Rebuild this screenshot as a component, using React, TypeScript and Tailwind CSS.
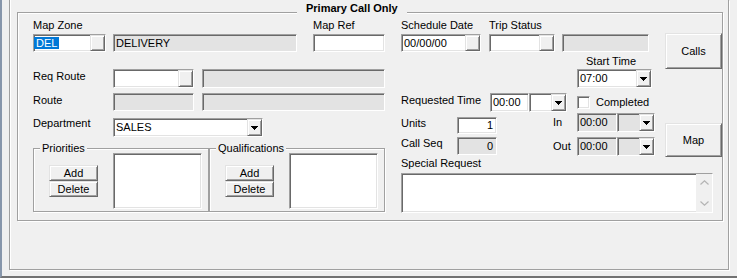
import React from 'react';

// classic win32 edges
const sunken =
  'border border-t-[#a0a0a0] border-l-[#a0a0a0] border-b-white border-r-white shadow-[inset_1px_1px_0_#696969,inset_-1px_-1px_0_#e3e3e3]';
const raised =
  'border border-t-[#e3e3e3] border-l-[#e3e3e3] border-b-[#696969] border-r-[#696969] shadow-[inset_1px_1px_0_#fff,inset_-1px_-1px_0_#a0a0a0] bg-[#f0f0f0]';
const etched = 'border border-[#a0a0a0] shadow-[inset_1px_1px_0_#fff,1px_1px_0_#fff]';

type P = { className?: string; children?: React.ReactNode };

function Label({ className = '', children }: P) {
  return <div className={`h-[13px] leading-[13px] whitespace-nowrap ${className}`}>{children}</div>;
}

function Arrow() {
  return (
    <svg width="7" height="4" viewBox="0 0 7 4" shapeRendering="crispEdges">
      <path d="M0 0h7v1h-1v1h-1v1h-1v1h-1v-1h-1v-1h-1v-1h-1z" fill="#000" />
    </svg>
  );
}

function Box({ className = '', gray, right, children }: P & { gray?: boolean; right?: boolean }) {
  return (
    <div
      className={`${sunken} ${gray ? 'bg-[#e3e3e3]' : 'bg-white'} flex items-center whitespace-nowrap overflow-hidden ${
        right ? 'justify-end pr-[3px]' : 'pl-[2px]'
      } ${className}`}
    >
      {children}
    </div>
  );
}

function Combo({ className = '', gray, arrow, children }: P & { gray?: boolean; arrow?: boolean }) {
  return (
    <div className={`${sunken} ${gray ? 'bg-[#e3e3e3]' : 'bg-white'} flex ${className}`}>
      <div className="flex-1 flex items-center pl-[2px] whitespace-nowrap overflow-hidden">{children}</div>
      <div className={`${raised} w-[15px] flex items-center justify-center`}>{arrow && <Arrow />}</div>
    </div>
  );
}

function Button({ className = '', children }: P) {
  return <div className={`${raised} flex items-center justify-center ${className}`}>{children}</div>;
}

function GroupBox({ title, className = '', children }: P & { title: string }) {
  return (
    <div className={`relative ${etched} ${className}`}>
      <span className="absolute left-[6px] -top-[7px] px-[2px] bg-[#f0f0f0] leading-[13px] whitespace-nowrap">
        {title}
      </span>
      {children}
    </div>
  );
}

function ListPanel() {
  return (
    <div className="flex items-start pl-[15px] pt-[4px]">
      <div className="mt-[12px] flex flex-col w-[49px]">
        <Button className="h-[16px]">Add</Button>
        <Button className="h-[16px]">Delete</Button>
      </div>
      <div className={`${sunken} bg-white ml-[15px] w-[89px] h-[56px]`} />
    </div>
  );
}

function Chevron({ up }: { up?: boolean }) {
  return (
    <svg width="9" height="5" viewBox="0 0 9 5">
      <path d={up ? 'M0.5 4.5L4.5 0.8L8.5 4.5' : 'M0.5 0.5L4.5 4.2L8.5 0.5'} fill="none" stroke="#b4b4b4" strokeWidth="1.2" />
    </svg>
  );
}

export default function App() {
  return (
    <div className="w-[737px] h-[278px] bg-[#f0f0f0] border-l-2 border-l-[#8796ab] border-b-2 border-b-[#737373] font-['Liberation_Sans',Arial,sans-serif] text-[11px] leading-[13px] text-black overflow-hidden">
      {/* outer frame, its top runs off the window */}
      <div className="ml-[7px] w-[720px] h-[270px] border-l border-r border-b border-[#a0a0a0] shadow-[inset_1px_0_0_#fff,1px_1px_0_#fff] pt-[12px] pl-[7px]">
        <div className={`relative ${etched} w-[706px] h-[209px]`}>
          <span className="absolute left-[279px] -top-[11px] px-[9px] bg-[#f0f0f0] font-bold leading-[13px] whitespace-nowrap">
            Primary Call Only
          </span>

          <div className="flex pl-[15px] pt-[6px]">
            {/* left column */}
            <div className="w-[352px] flex flex-col">
              <div className="flex items-start">
                <div>
                  <Label>Map Zone</Label>
                  <div className="flex mt-[2px]">
                    <Combo className="w-[73px] h-[18px]">
                      <span className="-ml-[2px] bg-[#0078d7] text-white px-[2px] leading-[12px]">DEL</span>
                    </Combo>
                    <Box gray className="ml-[7px] w-[184px] h-[18px]">DELIVERY</Box>
                  </div>
                </div>
                <div className="ml-[16px]">
                  <Label>Map Ref</Label>
                  <Box className="mt-[2px] w-[72px] h-[18px]" />
                </div>
              </div>

              <div className="flex items-start mt-[17px]">
                <Label className="w-[80px] mt-[1px]">Req Route</Label>
                <Combo className="w-[81px] h-[19px]" />
                <Box gray className="ml-[8px] w-[183px] h-[19px]" />
              </div>

              <div className="flex items-start mt-[5px]">
                <Label className="w-[80px] mt-[1px]">Route</Label>
                <Box gray className="w-[81px] h-[18px]" />
                <Box gray className="ml-[8px] w-[183px] h-[18px]" />
              </div>

              <div className="flex items-start mt-[6px]">
                <Label className="w-[80px]">Department</Label>
                <Combo arrow className="mt-[1px] w-[150px] h-[19px]">SALES</Combo>
              </div>

              <div className="flex mt-[11px]">
                <GroupBox title="Priorities" className="w-[176px] h-[64px]">
                  <ListPanel />
                </GroupBox>
                <GroupBox title="Qualifications" className="w-[176px] h-[64px]">
                  <ListPanel />
                </GroupBox>
              </div>
            </div>

            {/* right area */}
            <div className="ml-[16px] flex flex-col">
              <div className="flex">
                <div className="w-[255px] flex flex-col">
                  <div className="flex items-start">
                    <div>
                      <Label>Schedule Date</Label>
                      <Combo className="mt-[2px] w-[80px] h-[18px]">00/00/00</Combo>
                    </div>
                    <div className="ml-[8px]">
                      <Label>Trip Status</Label>
                      <div className="flex mt-[2px]">
                        <Combo className="w-[66px] h-[18px]" />
                        <Box gray className="ml-[7px] w-[87px] h-[18px]" />
                      </div>
                    </div>
                  </div>

                  <div className="pl-[176px] flex flex-col">
                    <Label className="ml-[9px] mt-[3px]">Start Time</Label>
                    <Combo arrow className="mt-[1px] w-[75px] h-[19px]">07:00</Combo>
                  </div>

                  <div className="flex items-start mt-[5px]">
                    <Label className="w-[89px] mt-[1px]">Requested Time</Label>
                    <Box className="w-[39px] h-[19px]">00:00</Box>
                    <Combo arrow className="w-[38px] h-[19px]" />
                    <div className={`${sunken} bg-white ml-[10px] mt-[3px] w-[13px] h-[13px]`} />
                    <Label className="ml-[6px] mt-[3px]">Completed</Label>
                  </div>

                  <div className="flex mt-[1px]">
                    <div className="w-[96px] flex flex-col pt-[4px]">
                      <div className="flex items-start">
                        <Label className="w-[56px]">Units</Label>
                        <Box right className="w-[40px] h-[17px]">1</Box>
                      </div>
                      <div className="flex items-start mt-[3px]">
                        <Label className="w-[56px]">Call Seq</Label>
                        <Box right gray className="w-[40px] h-[18px]">0</Box>
                      </div>
                    </div>
                    <div className="ml-[56px] flex flex-col">
                      <div className="flex items-start">
                        <Label className="w-[24px] mt-[3px]">In</Label>
                        <Box gray className="w-[40px] h-[19px]">00:00</Box>
                        <Combo gray arrow className="w-[38px] h-[19px]" />
                      </div>
                      <div className="flex items-start mt-[5px]">
                        <Label className="w-[24px] mt-[3px]">Out</Label>
                        <Box gray className="w-[40px] h-[19px]">00:00</Box>
                        <Combo gray arrow className="w-[38px] h-[19px]" />
                      </div>
                    </div>
                  </div>
                </div>

                <div className="ml-[9px] flex flex-col">
                  <Button className="mt-[14px] w-[57px] h-[36px]">Calls</Button>
                  <Button className="mt-[54px] w-[57px] h-[34px]">Map</Button>
                </div>
              </div>

              <Label>Special Request</Label>
              <div className={`${sunken} bg-white mt-[3px] w-[312px] h-[40px] flex justify-end`}>
                <div className="w-[16px] bg-[#f0f0f0] flex flex-col items-center justify-between py-[6px]">
                  <Chevron up />
                  <Chevron />
                </div>
              </div>
            </div>
          </div>
        </div>
      </div>
    </div>
  );
}
